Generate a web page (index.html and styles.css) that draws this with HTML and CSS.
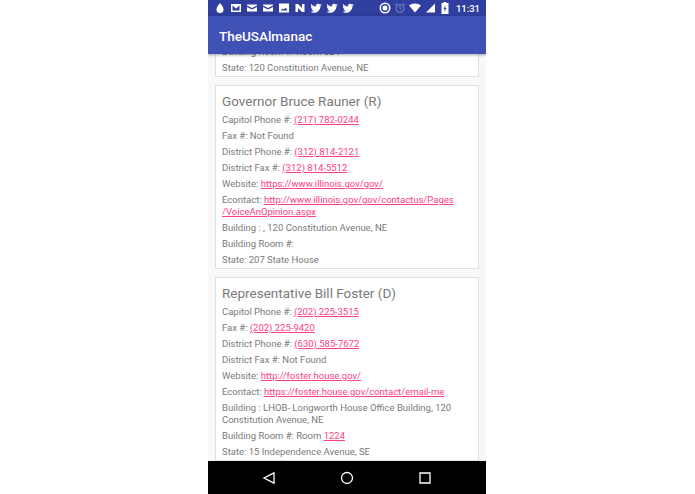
FILE: index.html
```html
<!DOCTYPE html>
<html lang="en">
<head>
  <meta charset="UTF-8">
  <meta name="viewport" content="width=device-width, initial-scale=1.0">
  <title>TheUSAlmanac</title>
  <link rel="stylesheet" href="styles.css">
</head>
<body>
  <div class="phone">
    <!-- Status bar -->
    <div class="status-bar">
      <div class="status-left">
        <svg viewBox="0 0 12 12"><path d="M6 1C6 1 2.500 5 2.500 7.500a3.500 3.500 0 0 0 7 0C9.500 5 6 1 6 1z"/></svg>
        <svg viewBox="0 0 12 12"><path fill-rule="evenodd" d="M1 2h10v8H1zM2.500 3.500v5h7v-5L6 6.500z"/></svg>
        <svg viewBox="0 0 12 12"><path d="M1 2.500h10v1L6 6 1 3.500zM1 5l5 2.500L11 5v4.500H1z"/></svg>
        <svg viewBox="0 0 12 12"><path d="M1 2.500h10v1L6 6 1 3.500zM1 5l5 2.500L11 5v4.500H1z"/></svg>
        <svg viewBox="0 0 12 12"><path fill-rule="evenodd" d="M1 1.500h10v9H1zM2.500 8.500h7L7.500 5.500 6 7.500 5 6.500z"/></svg>
        <svg viewBox="0 0 12 12"><path d="M1.500 2h2.500l4 4V2h2.500v8H8L4 6v4H1.500z"/></svg>
        <svg viewBox="0 0 12 12"><path d="M11.500 2.800c-.4.200-.8.300-1.300.4.500-.3.800-.7 1-1.300-.4.300-.9.400-1.400.5a2.300 2.300 0 0 0-3.900 2.100C4 4.400 2.300 3.500 1.200 2.100c-.6 1-.3 2.300.7 3-.4 0-.7-.1-1-.3 0 1.100.8 2.100 1.800 2.300-.3.100-.7.100-1 0 .3.900 1.100 1.600 2.100 1.600-1 .8-2.200 1.100-3.400 1 1 .7 2.200 1 3.500 1 4.300 0 6.700-3.600 6.600-6.800.5-.3.900-.7 1.500-1.100z"/></svg>
        <svg viewBox="0 0 12 12"><path d="M11.500 2.800c-.4.200-.8.300-1.300.4.500-.3.800-.7 1-1.300-.4.300-.9.400-1.400.5a2.300 2.300 0 0 0-3.900 2.100C4 4.400 2.300 3.500 1.200 2.100c-.6 1-.3 2.300.7 3-.4 0-.7-.1-1-.3 0 1.100.8 2.100 1.800 2.300-.3.100-.7.100-1 0 .3.900 1.100 1.600 2.100 1.600-1 .8-2.200 1.100-3.400 1 1 .7 2.200 1 3.500 1 4.300 0 6.700-3.600 6.600-6.800.5-.3.900-.7 1.500-1.100z"/></svg>
        <svg viewBox="0 0 12 12"><path d="M11.500 2.800c-.4.200-.8.300-1.300.4.500-.3.800-.7 1-1.300-.4.300-.9.400-1.400.5a2.300 2.300 0 0 0-3.900 2.100C4 4.400 2.300 3.500 1.200 2.100c-.6 1-.3 2.300.7 3-.4 0-.7-.1-1-.3 0 1.100.8 2.100 1.800 2.300-.3.100-.7.100-1 0 .3.900 1.100 1.600 2.100 1.600-1 .8-2.200 1.100-3.400 1 1 .7 2.200 1 3.500 1 4.300 0 6.700-3.600 6.600-6.800.5-.3.900-.7 1.500-1.100z"/></svg>
      </div>
      <div class="status-right">
        <svg viewBox="0 0 12 12"><path fill-rule="evenodd" d="M6 .5a5.500 5.500 0 1 0 0 11 5.500 5.500 0 0 0 0-11zM6 2a4 4 0 1 1 0 8 4 4 0 0 1 0-8zM6 3.500a2.500 2.500 0 1 0 0 5 2.500 2.500 0 0 0 0-5z"/></svg>
        <svg class="dim" viewBox="0 0 12 12"><path fill="none" stroke="#fff" d="M6 2.500a4 4 0 1 0 0 8 4 4 0 0 0 0-8zM6 4.500v2.200l1.500 1M1 3l2-1.800M11 3L9 1.200"/></svg>
        <svg viewBox="0 0 12 12"><path d="M0 3.500C3.500.8 8.500.8 12 3.500L6 10.500z"/></svg>
        <svg viewBox="0 0 12 12"><path d="M11 1.500v9H2z"/></svg>
        <svg viewBox="0 0 12 12"><path fill-rule="evenodd" d="M4.500 0h3v1H9.500v11h-7V1h2zM6.500 3L4.500 7h1.200L5.500 10l2-4H6.300z"/></svg>
        <span class="clock">11:31</span>
      </div>
    </div>

    <!-- App bar -->
    <div class="app-bar">TheUSAlmanac</div>

    <!-- Cards -->
    <div class="content">
      <div class="card-list">
        <div class="card">
          <p>Building Room #: Room 324</p>
          <p>State: 120 Constitution Avenue, NE</p>
        </div>
        <div class="card">
          <h2>Governor Bruce Rauner (R)</h2>
          <p>Capitol Phone #: <a href="#">(217) 782-0244</a></p>
          <p>Fax #: Not Found</p>
          <p>District Phone #: <a href="#">(312) 814-2121</a></p>
          <p>District Fax #: <a href="#">(312) 814-5512</a></p>
          <p>Website: <a href="#">https://www.illinois.gov/gov/</a></p>
          <p>Econtact: <a href="#">http://www.illinois.gov/gov/contactus/Pages<br>/VoiceAnOpinion.aspx</a></p>
          <p>Building : , 120 Constitution Avenue, NE</p>
          <p>Building Room #:</p>
          <p>State: 207 State House</p>
        </div>
        <div class="card">
          <h2>Representative Bill Foster (D)</h2>
          <p>Capitol Phone #: <a href="#">(202) 225-3515</a></p>
          <p>Fax #: <a href="#">(202) 225-9420</a></p>
          <p>District Phone #: <a href="#">(630) 585-7672</a></p>
          <p>District Fax #: Not Found</p>
          <p>Website: <a href="#">http://foster.house.gov/</a></p>
          <p>Econtact: <a href="#">https://foster.house.gov/contact/email-me</a></p>
          <p>Building : LHOB- Longworth House Office Building, 120 Constitution Avenue, NE</p>
          <p>Building Room #: Room <a href="#">1224</a></p>
          <p>State: 15 Independence Avenue, SE</p>
        </div>
      </div>
    </div>

    <!-- Navigation bar -->
    <div class="nav-bar">
      <svg viewBox="0 0 14 14"><path d="M12 1.800v10.400L2 7z"/></svg>
      <svg viewBox="0 0 14 14"><circle cx="7" cy="7" r="5.500"/></svg>
      <svg viewBox="0 0 14 14"><path d="M2 2h10v10H2z"/></svg>
    </div>
  </div>
</body>
</html>
```

FILE: styles.css
```css
body {
  margin: 0;
  background-color: #FFF;
  font-family: Roboto, "Liberation Sans", sans-serif;
}

.phone {
  display: flex;
  flex-direction: column;
  width: 278px;
  height: 494px;
  margin-left: 208px;
  overflow: hidden;
  background-color: #F8F8F8;
}

/* Status bar */
.status-bar {
  display: flex;
  justify-content: space-between;
  align-items: center;
  flex: none;
  height: 16px;
  padding: 0 6px;
  background-color: #303F9F;
}

.status-left,
.status-right {
  display: flex;
  align-items: center;
}

.status-left {
  gap: 4px;
}

.status-right {
  gap: 3px;
}

.status-bar svg {
  width: 12px;
  height: 12px;
  fill: #fff;
}

.status-bar svg.dim {
  opacity: 0.4;
  fill: none;
}

.clock {
  margin-left: 2px;
  color: #fff;
  font-size: 9.5px;
  font-weight: 500;
}

/* App bar */
.app-bar {
  position: relative;
  z-index: 1;
  flex: none;
  height: 38px;
  padding-left: 11px;
  background-color: #3F51B5;
  box-shadow: 0 1px 3px rgba(0, 0, 0, 0.35);
  color: #fff;
  font-size: 13.5px;
  font-weight: 500;
  line-height: 40px;
}

/* Cards */
.content {
  flex: 1;
  min-height: 0;
  overflow: hidden;
}

.card-list {
  margin-top: -12px;
  padding: 0 7px;
}

.card {
  margin-bottom: 8px;
  padding: 3px 6px 0;
  border: 1px solid #E0E0E0;
  background-color: #FFF;
  color: #7A7A7A;
}

.card h2 {
  margin: 0;
  padding: 3px 0 3px;
  font-size: 13.5px;
  font-weight: 400;
  line-height: 19px;
}

.card p {
  margin: 0 0 4px;
  font-size: 9.5px;
  line-height: 12px;
}

.card p:last-child {
  margin-bottom: 2px;
}

.card a {
  color: #FF4081;
}

/* Navigation bar */
.nav-bar {
  display: flex;
  justify-content: center;
  align-items: center;
  gap: 64px;
  flex: none;
  height: 33px;
  background-color: #000;
}

.nav-bar svg {
  width: 14px;
  height: 14px;
  fill: none;
  stroke: #fff;
  stroke-width: 1.300;
}
```
